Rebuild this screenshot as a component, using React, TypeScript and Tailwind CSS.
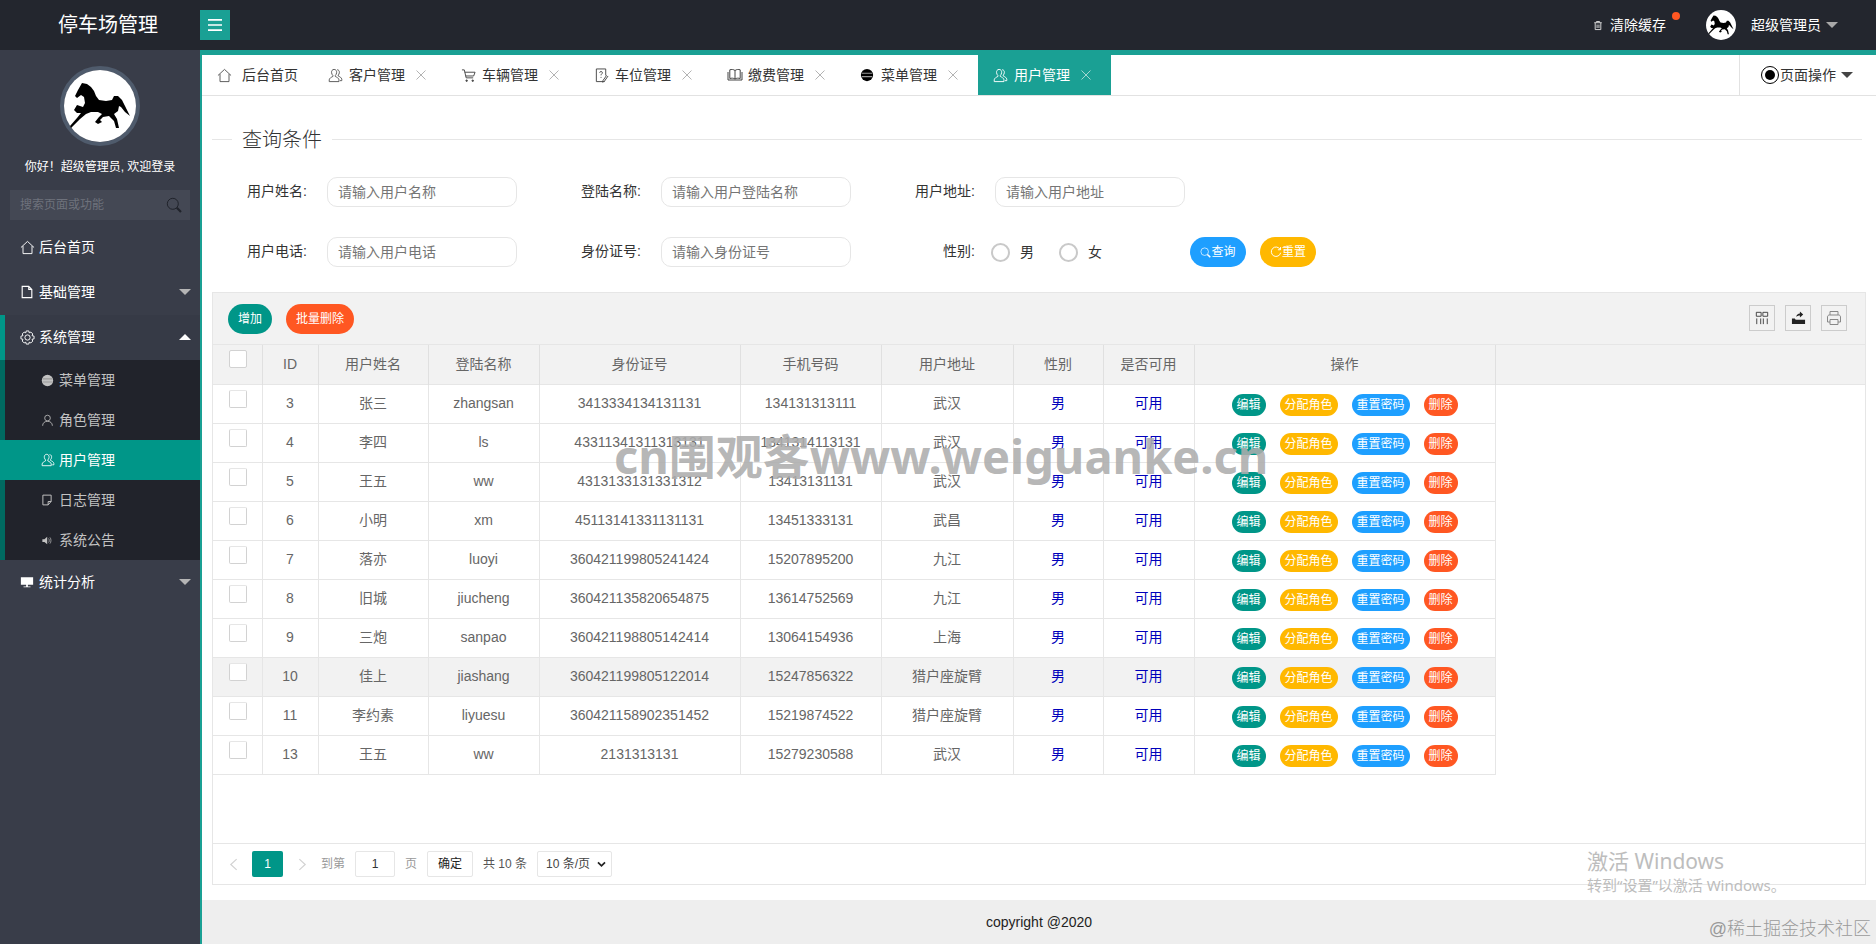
import React from "react";

const FONT = "font-['Liberation_Sans','Noto_Sans_CJK_SC',sans-serif]";

function Svg({ className, children, fill = "none" }: { className?: string; children: React.ReactNode; fill?: string }) {
  return (
    <svg viewBox="0 0 16 16" fill={fill} stroke={fill === "none" ? "currentColor" : "none"} strokeWidth={1} className={className}>
      {children}
    </svg>
  );
}

const HomeIcon = ({ className }: { className?: string }) => (
  <Svg className={className}>
    <path d="M1 8 L8 1.5 L15 8 M3.2 6.5 V14.5 H12.8 V6.5" />
  </Svg>
);
const UserIcon = ({ className }: { className?: string }) => (
  <Svg className={className}>
    <path d="M6.5 1.5 C4.5 1.5 3.6 3.2 3.8 5 C3.9 6.4 4.6 7.3 5.2 7.9 V9 C3.5 9.9 1.5 10.8 1.3 12.6 V14.5 H11.7 V12.6 C11.5 10.8 9.5 9.9 7.8 9 V7.9 C8.4 7.3 9.1 6.4 9.2 5 C9.4 3.2 8.5 1.5 6.5 1.5 Z" />
    <path d="M9.8 1.8 C11.6 2 12.3 3.5 12.1 5 C12 6.2 11.4 7.1 10.9 7.6 V8.5 C12.5 9.3 14.5 10.2 14.7 12 V13.5 H12.8" />
  </Svg>
);
const PersonIcon = ({ className }: { className?: string }) => (
  <Svg className={className}>
    <circle cx="8" cy="5" r="3.5" />
    <path d="M2 14.5 C2 11 4.5 9 8 9 C11.5 9 14 11 14 14.5" />
  </Svg>
);
const CartIcon = ({ className }: { className?: string }) => (
  <Svg className={className}>
    <path d="M1 2 H3.5 L5.5 10.5 H13 M4 4.5 H15 L13.5 8.5 H5" />
    <circle cx="6" cy="13.5" r="0.8" fill="currentColor" />
    <circle cx="12.5" cy="13.5" r="0.8" fill="currentColor" />
  </Svg>
);
const NoteIcon = ({ className }: { className?: string }) => (
  <Svg className={className}>
    <path d="M11 14.5 H2.5 V1 H12.5 V8" />
    <path d="M6 5 C6 3.4 9 3.4 9 5 C9 6.2 7.5 6.2 7.5 7.8 M7.5 9.5 V10.5" />
    <path d="M15 8.5 L10.5 15 M13.5 7.8 L9.5 13.5 L9.3 15.5" />
  </Svg>
);
const BookIcon = ({ className }: { className?: string }) => (
  <Svg className={className}>
    <path d="M8 3.5 C6.5 2.3 4.5 2.3 2.8 2.8 V11.5 C4.5 11 6.5 11 8 12 C9.5 11 11.5 11 13.2 11.5 V2.8 C11.5 2.3 9.5 2.3 8 3.5 Z M8 3.5 V12 M1 5 V13 H15 V5" />
  </Svg>
);
const MenuDot = ({ className }: { className?: string }) => (
  <svg viewBox="0 0 16 16" className={className}>
    <circle cx="8" cy="8" r="7" fill="currentColor" />
    <path d="M2 6 H14 M2 9.8 H14" stroke="#999" strokeWidth="1.3" />
  </svg>
);
const Gear = ({ className }: { className?: string }) => (
  <Svg className={className}>
    <path d="M6.6 1 H9.4 L9.8 3 L11.6 2.2 L13.6 4.2 L12.8 6 L15 6.6 V9.4 L12.8 10 L13.6 11.8 L11.6 13.8 L9.8 13 L9.4 15 H6.6 L6.2 13 L4.4 13.8 L2.4 11.8 L3.2 10 L1 9.4 V6.6 L3.2 6 L2.4 4.2 L4.4 2.2 L6.2 3 Z" />
    <circle cx="8" cy="8" r="2.8" />
  </Svg>
);
const FileIcon = ({ className }: { className?: string }) => (
  <Svg className={className}>
    <path d="M2.5 1.5 H10 L13.5 5 V14.5 H2.5 Z M10 1.5 V5 H13.5" strokeWidth="1.3" />
  </Svg>
);
const LogIcon = ({ className }: { className?: string }) => (
  <Svg className={className}>
    <path d="M2.5 1.5 H13.5 V10 L9.5 14.5 H2.5 Z M13.5 10 H9.5 V14.5" strokeWidth="1.3" />
  </Svg>
);
const Speaker = ({ className }: { className?: string }) => (
  <svg viewBox="0 0 16 16" fill="currentColor" className={className}>
    <path d="M2 6 H5 L9 2.5 V13.5 L5 10 H2 Z" />
    <path d="M11 5 C12.3 6.5 12.3 9.5 11 11 M13 3.5 C15 5.5 15 10.5 13 12.5" stroke="currentColor" fill="none" />
  </svg>
);
const Screen = ({ className }: { className?: string }) => (
  <svg viewBox="0 0 16 16" fill="currentColor" className={className}>
    <path d="M1 2.5 H15 V11 H9 V13 H12 V14 H4 V13 H7 V11 H1 Z" />
  </svg>
);
const Trash = ({ className }: { className?: string }) => (
  <svg viewBox="0 0 16 16" fill="none" stroke="currentColor" strokeWidth="1.5" className={className}>
    <path d="M2 3.5 H14 M5.5 3 V1.6 H10.5 V3 M3.5 4 V14.5 H12.5 V4" />
    <path d="M6.5 6.5 V12 M9.5 6.5 V12" />
  </svg>
);
const Search = ({ className }: { className?: string }) => (
  <Svg className={className}>
    <circle cx="6.8" cy="6.8" r="5.5" />
    <path d="M10.8 10.8 L15 15" strokeWidth="2.2" />
  </Svg>
);
const Refresh = ({ className }: { className?: string }) => (
  <Svg className={className}>
    <path d="M13.5 4.5 A6.3 6.3 0 1 0 14.2 9" strokeWidth="1.3" />
    <path d="M14 1.5 V5 H10.5" strokeWidth="1.3" />
  </Svg>
);
const Horse = ({ className }: { className?: string }) => (
  <svg viewBox="0 0 72 72" className={className}>
    <circle cx="36" cy="36" r="36" fill="#fff" />
    <path
      fill="#000"
      d="M18 13 L23 14 L27 17 L30 21 L32 26 L35 30 L42 31 L48 30 L50 26 L54 26 L58 30 L61 36 L66 46 L61 42 L57 37 L55 36 L54 41 L50 44 L53 49 L55 58 L52 58 L50 51 L45 46 L39 47 L36 50 L38 52 L34 54 L31 52 L35 47 L38 44 L34 42 L27 42 L22 44 L16 49 L7 58 L6 56 L13 48 L17 43 L13 43 L10 40 L13 35 L19 37 L21 33 L20 27 L17 25 L13 28 L11 26 L14 20 Z"
    />
  </svg>
);
const Close = ({ className }: { className?: string }) => (
  <Svg className={className}>
    <path d="M2 2 L14 14 M14 2 L2 14" />
  </Svg>
);
const Down = ({ className }: { className?: string }) => (
  <span className={`inline-block w-0 h-0 border-l-[6px] border-r-[6px] border-t-[6px] border-l-transparent border-r-transparent ${className}`} />
);
const Up = ({ className }: { className?: string }) => (
  <span className={`inline-block w-0 h-0 border-l-[6px] border-r-[6px] border-b-[6px] border-l-transparent border-r-transparent ${className}`} />
);

function SideItem({ icon, label, arrow, active }: { icon: React.ReactNode; label: string; arrow?: "down" | "up"; active?: boolean }) {
  return (
    <div className={`h-[45px] flex items-center text-sm text-white pb-px ${active ? "bg-[#363a46] border-l-[5px] border-[#009688] pl-[15px] pr-[10px]" : "pl-[20px] pr-[10px]"}`}>
      <span className="w-[19px] flex items-center">{icon}</span>
      <span className="flex-1">{label}</span>
      {arrow === "down" && <Down className="border-t-[#b5b5b5] mr-[-1px]" />}
      {arrow === "up" && <Up className="border-b-white mr-[-1px]" />}
    </div>
  );
}

function SubItem({ icon, label, active }: { icon: React.ReactNode; label: string; active?: boolean }) {
  return (
    <div className={`h-10 flex items-center text-sm ${active ? "bg-[#009688] text-white pl-[41px]" : "text-[#c2c2c2] border-l-[5px] border-[#006a60] pl-[36px]"}`}>
      <span className="w-[18px] flex items-center">{icon}</span>
      <span>{label}</span>
    </div>
  );
}

function Sidebar() {
  return (
    <aside className="w-[200px] shrink-0 bg-[#393d49] flex flex-col pt-4">
      <div className="mx-auto w-20 h-20 rounded-full border-4 border-[#4f5b6c]">
        <Horse className="w-[72px] h-[72px]" />
      </div>
      <div className="mt-[11px] h-5 leading-5 text-center text-xs text-white">你好！超级管理员, 欢迎登录</div>
      <div className="mx-[10px] mt-[13px] h-[30px] bg-[#444854] flex items-center justify-between pl-[10px] pr-[8px] text-xs text-[#6e727c]">
        <span>搜索页面或功能</span>
        <Search className="w-[16px] h-[16px] text-[#20232b]" />
      </div>
      <nav className="mt-[5px]">
        <SideItem icon={<HomeIcon className="w-[15px] h-[15px]" />} label="后台首页" />
        <SideItem icon={<FileIcon className="w-[14px] h-[14px]" />} label="基础管理" arrow="down" />
        <SideItem active icon={<Gear className="w-[15px] h-[15px]" />} label="系统管理" arrow="up" />
        <div className="bg-[#21232b]">
          <SubItem icon={<MenuDot className="w-[13px] h-[13px] text-[#c2c2c2]" />} label="菜单管理" />
          <SubItem icon={<PersonIcon className="w-[13px] h-[13px]" />} label="角色管理" />
          <SubItem active icon={<UserIcon className="w-[14px] h-[14px]" />} label="用户管理" />
          <SubItem icon={<LogIcon className="w-[12px] h-[12px]" />} label="日志管理" />
          <SubItem icon={<Speaker className="w-[11px] h-[11px]" />} label="系统公告" />
        </div>
        <SideItem icon={<Screen className="w-[14px] h-[14px]" />} label="统计分析" arrow="down" />
      </nav>
    </aside>
  );
}

function Tab({ icon, label, active }: { icon: React.ReactNode; label: string; active?: boolean }) {
  return (
    <div className={`w-[133px] h-full flex items-center text-sm ${active ? "bg-[#1aa094] text-white h-[41px] -ml-px pl-[15px]" : "text-[#333] pl-[14px]"}`}>
      <span className="w-[21px] flex items-center">{icon}</span>
      <span className="w-[56px]">{label}</span>
      <Close className={`w-[12px] h-[12px] ml-[10px] ${active ? "text-[#cfe9e6]" : "text-[#999]"}`} />
    </div>
  );
}

function TabBar() {
  return (
    <div className="h-[41px] shrink-0 border-b border-[#e2e2e2] flex items-start">
      <div className="w-[112px] h-10 flex items-center pl-[15px] text-sm text-[#333]">
        <HomeIcon className="w-[15px] h-[15px] text-[#555] mr-[10px]" />
        后台首页
      </div>
      <div className="flex h-10 items-start">
        <Tab icon={<UserIcon className="w-[15px] h-[15px] text-[#555]" />} label="客户管理" />
        <Tab icon={<CartIcon className="w-[15px] h-[15px] text-[#444]" />} label="车辆管理" />
        <Tab icon={<NoteIcon className="w-[15px] h-[15px] text-[#444]" />} label="车位管理" />
        <Tab icon={<BookIcon className="w-[16px] h-[16px] text-[#444]" />} label="缴费管理" />
        <Tab icon={<MenuDot className="w-[14px] h-[14px] text-black" />} label="菜单管理" />
        <Tab active icon={<UserIcon className="w-[15px] h-[15px]" />} label="用户管理" />
      </div>
      <div className="ml-auto w-[137px] h-10 border-l border-[#e2e2e2] flex items-center pl-[21px] text-sm text-[#333]">
        <span className="w-[18px] h-[18px] rounded-full border border-black flex items-center justify-center shrink-0 mr-[1px]">
          <span className="w-[10px] h-[10px] rounded-full bg-black" />
        </span>
        页面操作
        <Down className="border-t-[#444] ml-[5px]" />
      </div>
    </div>
  );
}

function Field({ label, placeholder }: { label: string; placeholder: string }) {
  return (
    <div className="w-[334px] flex items-center shrink-0">
      <label className="w-[95px] text-right text-sm text-[#333] mb-[2px]">{label}:</label>
      <input
        readOnly
        placeholder={placeholder}
        className="ml-5 w-[190px] h-[30px] rounded-[10px] border border-[#e6e6e6] pl-[10px] text-sm text-[#333] placeholder:text-[#757575] outline-none"
      />
    </div>
  );
}

function Radio({ label, className }: { label: string; className?: string }) {
  return (
    <div className={`flex items-center ${className ?? ""}`}>
      <span className="w-[19px] h-[19px] rounded-full border-2 border-[#c9c9c9]" />
      <span className="ml-[10px] text-sm text-[#333]">{label}</span>
    </div>
  );
}

function QueryForm() {
  return (
    <div className="shrink-0">
      <div className="flex items-center h-[30px] mt-[28px]">
        <div className="w-5 h-px bg-[#e6e6e6]" />
        <span className="mx-[10px] mt-[2px] text-xl text-[#333] font-light">查询条件</span>
        <div className="flex-1 h-px bg-[#e6e6e6] mr-[4px]" />
      </div>
      <div className="flex mt-[23px] h-[30px]">
        <Field label="用户姓名" placeholder="请输入用户名称" />
        <Field label="登陆名称" placeholder="请输入用户登陆名称" />
        <Field label="用户地址" placeholder="请输入用户地址" />
      </div>
      <div className="flex mt-[30px] h-[30px]">
        <Field label="用户电话" placeholder="请输入用户电话" />
        <Field label="身份证号" placeholder="请输入身份证号" />
        <div className="flex items-center">
          <label className="w-[95px] text-right text-sm text-[#333] mb-[2px]">性别:</label>
          <Radio label="男" className="ml-[16px]" />
          <Radio label="女" className="ml-[25px]" />
          <button className="ml-[88px] w-[56px] h-[30px] rounded-full bg-[#1e9fff] text-white text-xs flex items-center justify-center">
            <Search className="w-[11px] h-[11px]" />
            查询
          </button>
          <button className="ml-[14px] w-[56px] h-[30px] rounded-full bg-[#ffb800] text-white text-xs flex items-center justify-center">
            <Refresh className="w-[12px] h-[12px]" />
            重置
          </button>
        </div>
      </div>
    </div>
  );
}

type Row = [string, string, string, string, string, string];
const rows: Row[] = [
  ["3", "张三", "zhangsan", "3413334134131131", "134131313111", "武汉"],
  ["4", "李四", "ls", "43311341311313131", "1341314113131", "武汉"],
  ["5", "王五", "ww", "4313133131331312", "13413131131", "武汉"],
  ["6", "小明", "xm", "45113141331131131", "13451333131", "武昌"],
  ["7", "落亦", "luoyi", "360421199805241424", "15207895200", "九江"],
  ["8", "旧城", "jiucheng", "360421135820654875", "13614752569", "九江"],
  ["9", "三炮", "sanpao", "360421198805142414", "13064154936", "上海"],
  ["10", "佳上", "jiashang", "360421199805122014", "15247856322", "猎户座旋臂"],
  ["11", "李约素", "liyuesu", "360421158902351452", "15219874522", "猎户座旋臂"],
  ["13", "王五", "ww", "2131313131", "15279230588", "武汉"],
];

const Check = ({ head }: { head?: boolean }) => (
  <span className={`absolute left-4 w-[18px] h-[18px] rounded-[2px] border border-[#d2d2d2] bg-white top-[5px] ${head ? "" : "border-t-[#e6e6e6]"}`} />
);

const Pill = ({ c, w, t }: { c: string; w: string; t: string }) => (
  <span className={`h-[22px] rounded-full text-white text-xs leading-[22px] text-center ${c} ${w}`}>{t}</span>
);

const thCls = "relative border-r border-[#e0e0e0] font-normal text-sm text-[#666] text-center p-0";
const tdBase = "relative border-r border-b border-[#e6e6e6] text-sm text-center p-0 pb-[2px]";
const tdCls = `${tdBase} text-[#666]`;
const tdBlue = `${tdBase} text-[#0000bb]`;

function ToolBtn({ children, className }: { children: React.ReactNode; className?: string }) {
  return <span className={`w-[26px] h-[26px] border border-[#ccc] flex items-center justify-center ${className ?? ""}`}>{children}</span>;
}

function DataTable() {
  return (
    <table className="w-full table-fixed border-collapse">
      <colgroup>
        <col className="w-[49px]" />
        <col className="w-[56px]" />
        <col className="w-[110px]" />
        <col className="w-[111px]" />
        <col className="w-[201px]" />
        <col className="w-[141px]" />
        <col className="w-[132px]" />
        <col className="w-[90px]" />
        <col className="w-[91px]" />
        <col className="w-[301px]" />
        <col />
      </colgroup>
      <thead>
        <tr className="h-[39px] bg-[#f2f2f2] border-b border-[#e6e6e6]">
          <th className={thCls}>
            <Check head />
          </th>
          {["ID", "用户姓名", "登陆名称", "身份证号", "手机号码", "用户地址", "性别", "是否可用", "操作"].map((h) => (
            <th key={h} className={thCls}>
              {h}
            </th>
          ))}
          <th className="p-0" />
        </tr>
      </thead>
      <tbody>
        {rows.map((r) => (
          <tr key={r[0]} className={`h-[39px] ${r[0] === "10" ? "bg-[#f2f2f2]" : ""}`}>
            <td className={tdCls}>
              <Check />
            </td>
            {r.map((v, i) => (
              <td key={i} className={tdCls}>
                {v}
              </td>
            ))}
            <td className={tdBlue}>男</td>
            <td className={tdBlue}>可用</td>
            <td className={tdCls}>
              <div className="flex justify-center gap-[14px] mt-[4px]">
                <Pill c="bg-[#009688]" w="w-[34px]" t="编辑" />
                <Pill c="bg-[#ffb800]" w="w-[58px]" t="分配角色" />
                <Pill c="bg-[#1e9fff]" w="w-[58px]" t="重置密码" />
                <Pill c="bg-[#ff5722]" w="w-[34px]" t="删除" />
              </div>
            </td>
          </tr>
        ))}
      </tbody>
    </table>
  );
}

function Pager() {
  return (
    <div className="h-[41px] shrink-0 border-t border-[#e6e6e6] flex items-center text-xs text-[#666] pl-[16px]">
      <svg viewBox="0 0 10 14" className="w-[9px] h-[13px] text-[#d2d2d2]" fill="none" stroke="currentColor" strokeWidth="1.3">
        <path d="M8.5 1 L2 7 L8.5 13" />
      </svg>
      <span className="ml-[14px] w-[31px] h-[26px] bg-[#009688] rounded-[2px] text-white flex items-center justify-center">1</span>
      <svg viewBox="0 0 10 14" className="ml-[15px] w-[9px] h-[13px] text-[#d2d2d2]" fill="none" stroke="currentColor" strokeWidth="1.3">
        <path d="M1.5 1 L8 7 L1.5 13" />
      </svg>
      <span className="ml-[14px] text-[#999]">到第</span>
      <span className="ml-[10px] w-10 h-[26px] border border-[#e6e6e6] rounded-[2px] flex items-center justify-center text-[#333]">1</span>
      <span className="ml-[10px] text-[#999]">页</span>
      <span className="ml-[10px] w-[46px] h-[26px] border border-[#e6e6e6] rounded-[2px] flex items-center justify-center text-[#222]">确定</span>
      <span className="ml-[10px] text-[#555]">共 10 条</span>
      <span className="ml-[10px] w-[75px] h-[26px] border border-[#e6e6e6] rounded-[2px] flex items-center justify-between pl-2 pr-[5px] text-[#444]">
        10 条/页
        <svg viewBox="0 0 10 8" className="w-[9px] h-[7px] text-[#222]" fill="none" stroke="currentColor" strokeWidth="2">
          <path d="M1 1.5 L5 5.5 L9 1.5" />
        </svg>
      </span>
    </div>
  );
}

function TablePanel() {
  return (
    <div className="mt-[25px] flex-1 min-h-0 flex flex-col border border-[#e6e6e6]">
      <div className="h-[52px] shrink-0 bg-[#f2f2f2] border-b border-[#e6e6e6] flex items-center pl-[15px] pr-[18px]">
        <button className="w-[44px] h-[30px] rounded-full bg-[#009688] text-white text-xs">增加</button>
        <button className="ml-[14px] w-[68px] h-[30px] rounded-full bg-[#ff5722] text-white text-xs">批量删除</button>
        <div className="ml-auto flex gap-[10px] mb-[2px]">
          <ToolBtn>
            <svg viewBox="0 0 16 16" className="w-[14px] h-[14px] text-[#333]" fill="none" stroke="currentColor">
              <path d="M1.5 1.5 H7 V6 H1.5 Z M9 1.5 H14.5 V6 H9 Z M2 8.5 V15 M6.5 8.5 V15 M9.5 8.5 V15 M14 8.5 V15" />
            </svg>
          </ToolBtn>
          <ToolBtn>
            <svg viewBox="0 0 16 16" className="w-[15px] h-[15px] text-[#222]" fill="currentColor">
              <path d="M1 9 H4 L5 10.5 H15 V15 H1 Z M5.5 7.5 C5.8 5 7.5 3.8 9.5 3.6 V1.5 L13 4.8 L9.5 8 V5.8 C8 5.8 6.5 6.3 5.5 7.5 Z" />
            </svg>
          </ToolBtn>
          <ToolBtn>
            <svg viewBox="0 0 16 16" className="w-[16px] h-[16px] text-[#888]" fill="none" stroke="currentColor">
              <path d="M4 5 V1.5 H12 V5 M4 12 H1.5 V7 C1.5 5.8 2.2 5 3.5 5 H12.5 C13.8 5 14.5 5.8 14.5 7 V12 H12 M4 9.5 H12 V14.5 H4 Z" />
            </svg>
          </ToolBtn>
        </div>
      </div>
      <div className="flex-1 min-h-0">
        <DataTable />
      </div>
      <Pager />
    </div>
  );
}

export default function App() {
  return (
    <div className={`relative w-full h-screen overflow-hidden flex flex-col bg-white ${FONT}`}>
      <header className="h-[50px] shrink-0 bg-[#23262e] flex items-center text-white">
        <div className="w-[200px] pl-[16px] text-center text-xl">停车场管理</div>
        <button className="w-[30px] h-[30px] bg-[#1aa094] flex items-center justify-center">
          <svg viewBox="0 0 16 16" className="w-[16px] h-[16px]" fill="none" stroke="#fff" strokeWidth="1.7">
            <path d="M1 2.8 H15 M1 8 H15 M1 13.2 H15" />
          </svg>
        </button>
        <div className="ml-auto flex items-center text-sm pr-[38px]">
          <Trash className="w-[10px] h-[11px] text-[#ddd]" />
          <span className="ml-[7px] relative">
            清除缓存
            <span className="absolute left-[62px] top-[-3px] w-2 h-2 rounded-full bg-[#ff5722]" />
          </span>
          <Horse className="ml-[40px] w-[30px] h-[30px]" />
          <span className="ml-[15px]">超级管理员</span>
          <Down className="ml-[5px] border-t-[#a8a8a8]" />
        </div>
      </header>
      <div className="flex-1 min-h-0 flex">
        <Sidebar />
        <main className="flex-1 min-w-0 flex flex-col border-l-2 border-t-[5px] border-[#1aa094]">
          <TabBar />
          <div className="flex-1 min-h-0 flex flex-col px-[10px] pb-[15px]">
            <QueryForm />
            <TablePanel />
          </div>
          <footer className="h-[44px] shrink-0 bg-[#eeeeee] flex items-center justify-center text-sm text-[#222]">copyright @2020</footer>
        </main>
      </div>

      <div className="absolute left-[614px] top-[426px] font-['Noto_Sans','Noto_Sans_CJK_SC',sans-serif] font-bold text-[47px] leading-[60px] text-[#adadad]/90 whitespace-nowrap pointer-events-none">
        cn围观客www.weiguanke.cn
      </div>
      <div className="absolute left-[1587px] top-[847px] font-['Noto_Sans','Noto_Sans_CJK_SC',sans-serif] text-[#bdbdbd] pointer-events-none">
        <div className="text-[21px] leading-7">激活 Windows</div>
        <div className="text-[15px] leading-5">转到“设置”以激活 Windows。</div>
      </div>
      <div className="absolute right-[5px] top-[917px] text-lg leading-6 text-[#9a9a9a] font-light pointer-events-none">@稀土掘金技术社区</div>
    </div>
  );
}
